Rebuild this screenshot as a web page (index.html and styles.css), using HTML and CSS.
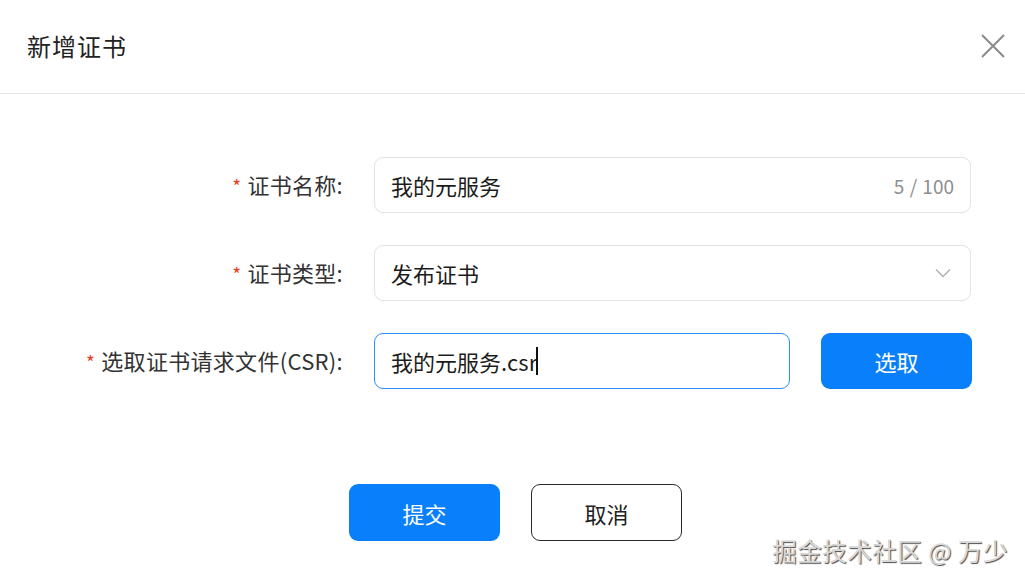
FILE: index.html
```html
<!DOCTYPE html>
<html lang="zh-CN">
<head>
<meta charset="utf-8">
<title>新增证书</title>
<link rel="stylesheet" href="styles.css">
</head>
<body>
<div class="dialog">
  <header class="dialog-header">
    <h1 class="dialog-title">新增证书</h1>
    <button class="close-btn" aria-label="关闭">
      <svg width="24" height="24" viewBox="0 0 24 24"><path d="M1 1L23 23M23 1L1 23" stroke="#8a8a8a" stroke-width="2" fill="none"/></svg>
    </button>
  </header>
  <form class="form">
    <div class="form-row">
      <label class="form-label"><span class="req">*</span>证书名称:</label>
      <div class="field input-field">
        <span class="field-value">我的元服务</span>
        <span class="counter">5 / 100</span>
      </div>
    </div>
    <div class="form-row">
      <label class="form-label"><span class="req">*</span>证书类型:</label>
      <div class="field input-field">
        <span class="field-value">发布证书</span>
        <svg class="chevron" width="16" height="10" viewBox="0 0 16 10"><path d="M1 1.5L8 8.5L15 1.5" stroke="#b0b0b0" stroke-width="1.4" fill="none"/></svg>
      </div>
    </div>
    <div class="form-row">
      <label class="form-label"><span class="req">*</span>选取证书请求文件(CSR):</label>
      <div class="field input-field focused short">
        <span class="field-value">我的元服务.csr<span class="caret"></span></span>
      </div>
      <button type="button" class="btn btn-primary pick">选取</button>
    </div>
    <div class="actions">
      <button type="button" class="btn btn-primary">提交</button>
      <button type="button" class="btn btn-default">取消</button>
    </div>
  </form>
  <div class="watermark">掘金技术社区 @ 万少</div>
</div>
</body>
</html>
```

FILE: styles.css
```css
* { box-sizing: border-box; }
html, body {
  margin: 0;
  padding: 0;
  background: #ffffff;
}
body {
  font-family: "Noto Sans CJK SC", "Noto Sans", sans-serif;
  color: #1f1f1f;
}
.dialog {
  position: relative;
  width: 1025px;
  height: 585px;
  overflow: hidden;
}
.dialog-header {
  height: 94px;
  border-bottom: 1px solid #e6e6e6;
  display: flex;
  align-items: center;
  justify-content: space-between;
  padding: 0 20px 3px 27px;
}
.dialog-title {
  margin: 0;
  font-size: 24px;
  font-weight: 400;
  color: #222;
  letter-spacing: 1px;
}
.close-btn {
  background: none;
  border: none;
  padding: 0;
  width: 24px;
  height: 24px;
  display: flex;
  margin-top: 2px;
}
.form {
  padding-top: 63px;
  display: flex;
  flex-direction: column;
  gap: 32px;
}
.form-row {
  display: flex;
  align-items: center;
  height: 56px;
}
.form-label {
  width: 343px;
  text-align: right;
  font-size: 22px;
  color: #333;
  margin-right: 31px;
  padding-bottom: 2px;
  letter-spacing: 0.3px;
}
.req {
  color: #e84026;
  margin-right: 6px;
  font-size: 19px;
}
.field {
  height: 56px;
  width: 597px;
  border: 1.5px solid #e3e3e3;
  border-radius: 9px;
  display: flex;
  align-items: center;
  justify-content: space-between;
  padding: 0 16px 0 16px;
}
.field.short {
  width: 416px;
}
.field.focused {
  border-color: #2b8fff;
}
.field-value {
  font-size: 22px;
  color: #1c1c1c;
  display: flex;
  align-items: center;
}
.caret {
  display: inline-block;
  width: 2px;
  height: 28px;
  background: #111;
  margin-left: -1px;
}
.counter {
  font-size: 19px;
  color: #8e8e8e;
  word-spacing: 1px;
}
.chevron {
  margin-right: 3px;
}
.btn {
  height: 57px;
  width: 151px;
  border-radius: 9px;
  font-family: "Noto Sans CJK SC", "Noto Sans", sans-serif;
  font-size: 22px;
  cursor: pointer;
}
.btn-primary {
  background: #0a7ffc;
  border: none;
  color: #ffffff;
}
.btn-default {
  background: #ffffff;
  border: 1.2px solid #2a2a2a;
  color: #222;
}
.pick {
  margin-left: 31px;
  height: 56px;
}
.actions {
  display: flex;
  gap: 31px;
  padding-left: 349px;
  margin-top: 63px;
}
.watermark {
  position: absolute;
  right: 17px;
  bottom: 17px;
  font-size: 24.5px;
  color: #d8d8d8;
  text-shadow: 1px 1px 1px #4a4a4a, -1px -1px 0 #ffffff;
  letter-spacing: 0.5px;
}
```
